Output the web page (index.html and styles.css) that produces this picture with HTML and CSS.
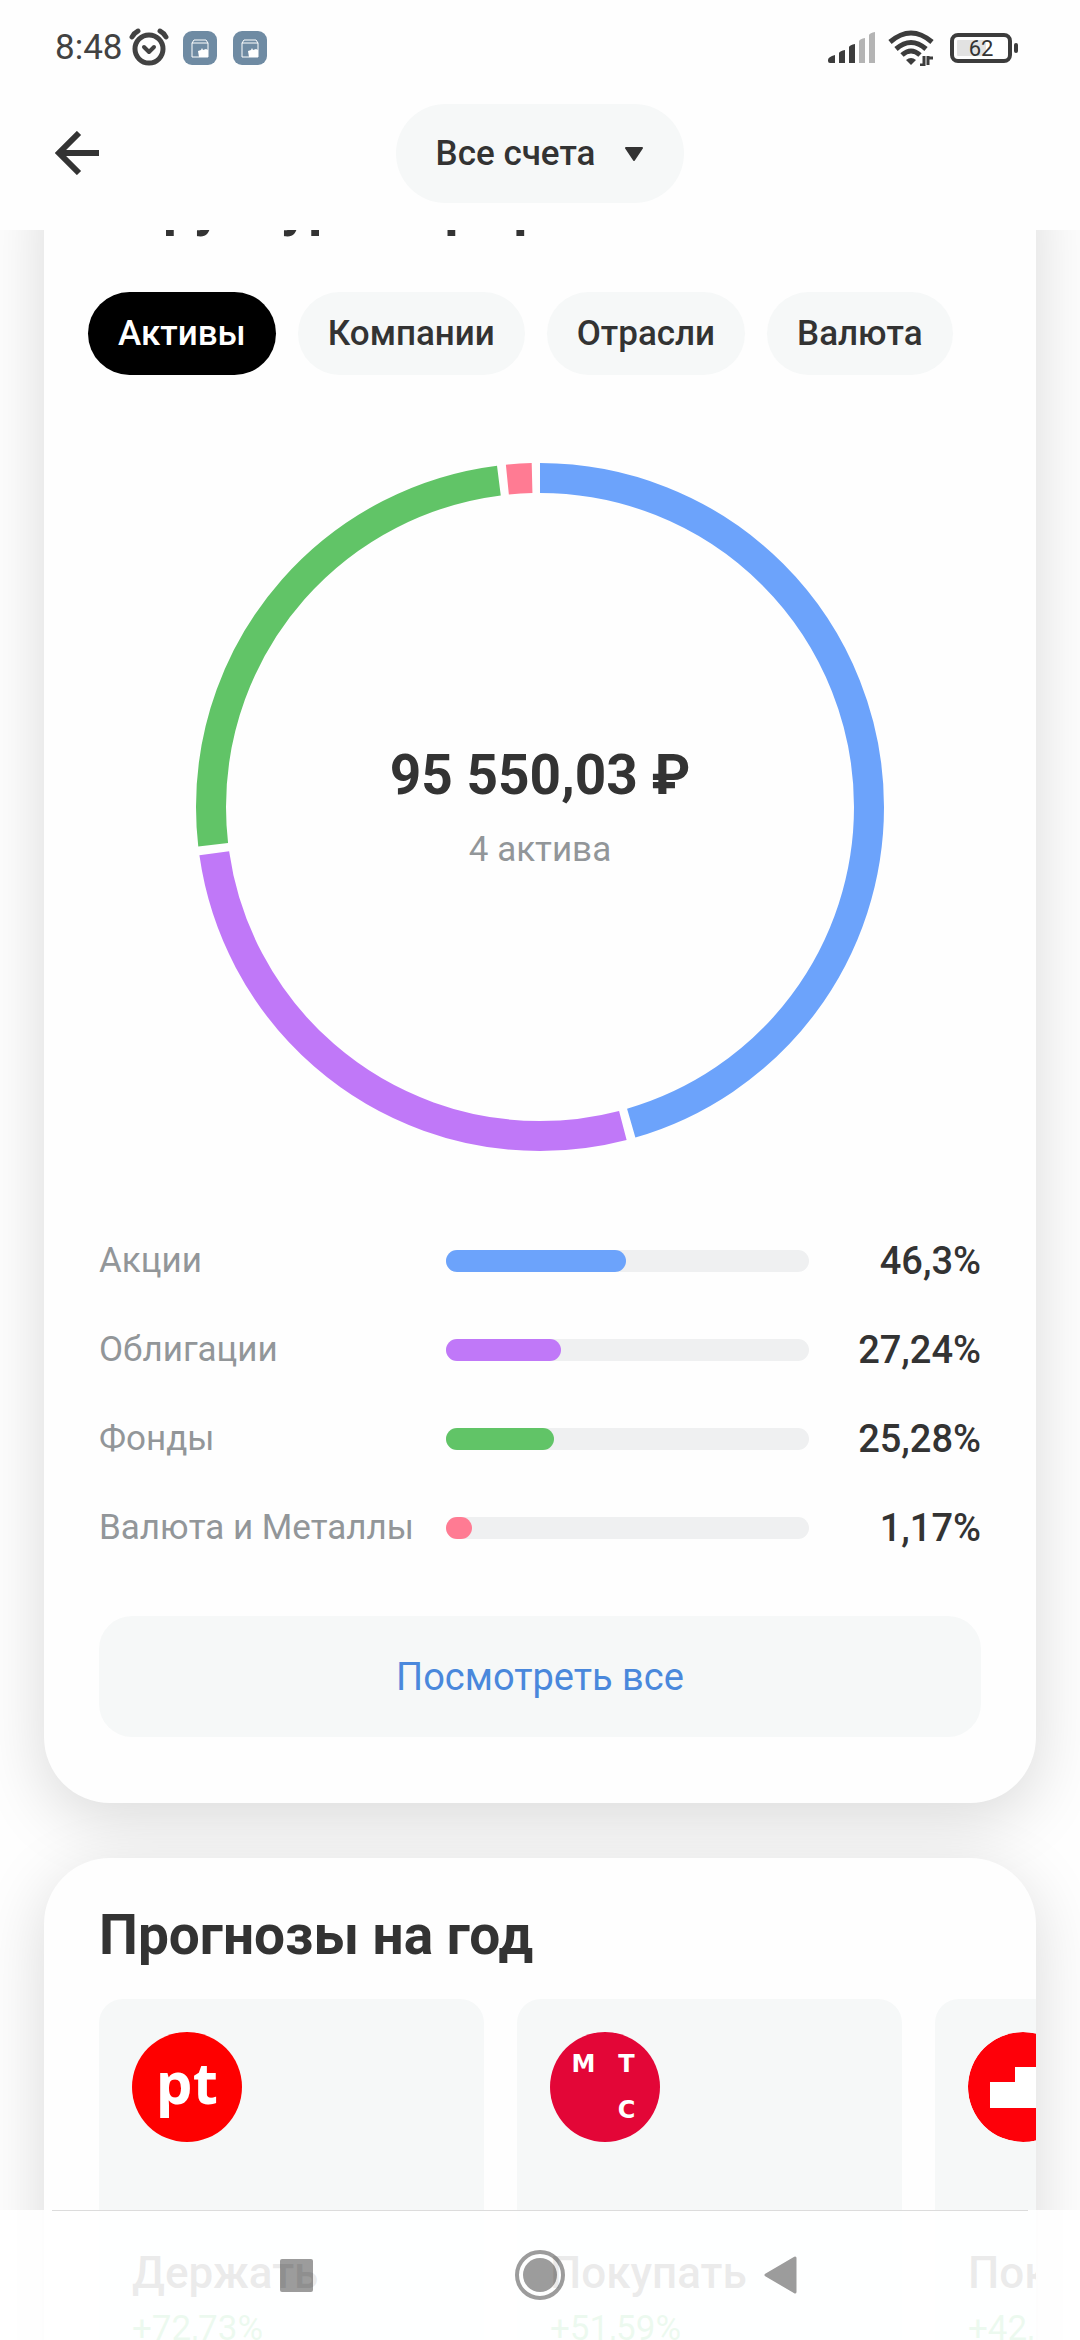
FILE: index.html
```
<!DOCTYPE html>
<html lang="ru">
<head>
    <meta charset="UTF-8">
    <meta name="viewport" content="width=device-width, initial-scale=1.0">
    <title>Аналитика портфеля</title>
    <link rel="stylesheet" href="styles.css">
</head>
<body>

<header class="header">
    <div class="status-bar">
        <div class="status-left">
            <span class="time">8:48</span>
            <!-- alarm -->
            <svg class="icon-alarm" viewBox="0 0 40 40" fill="none" stroke="#424242" stroke-linecap="round">
                <circle cx="20" cy="21" r="14" stroke-width="5"/>
                <path d="M15 19l5 5 5-5" stroke-width="4" stroke-linejoin="round"/>
                <path d="M3 9Q5 5 9 3M37 9Q35 5 31 3" stroke-width="5"/>
            </svg>
            <svg class="icon-app" viewBox="0 0 34 34">
                <rect width="34" height="34" rx="9" fill="#6f8ba3"/>
                <path d="M9 12h16v14H9zM9 12l2-3h12l2 3" fill="none" stroke="#fff"/>
                <path d="M15 20l3-1 1-2 1 2 3-1 2 1v7h-9z" fill="#fff"/>
            </svg>
            <svg class="icon-app" viewBox="0 0 34 34">
                <rect width="34" height="34" rx="9" fill="#6f8ba3"/>
                <path d="M9 12h16v14H9zM9 12l2-3h12l2 3" fill="none" stroke="#fff"/>
                <path d="M15 20l3-1 1-2 1 2 3-1 2 1v7h-9z" fill="#fff"/>
            </svg>
        </div>
        <div class="status-right">
            <!-- signal -->
            <svg class="icon-signal" viewBox="0 0 48 32">
                <path d="M0 28q0-3 7-5v8H2q-2 0-2-2zM11 21q1-2 6-3v13h-6zM21 15q1-2 6-3v19h-6z" fill="#3c3c3c"/>
                <path d="M31 9q1-2 6-3v25h-6zM41 3q1-2 6-3v31h-6z" fill="#b4b4b4"/>
            </svg>
            <!-- wifi -->
            <svg class="icon-wifi" viewBox="0 0 46 36" fill="none" stroke="#3c3c3c" stroke-width="5">
                <path d="M2 12Q23-6 44 12M8 19Q23 6 38 19M14 25Q23 17 32 25"/>
                <path d="M18 30q5-4 10 0l-5 5z" fill="#3c3c3c" stroke="none"/>
                <path d="M36 26v9h-4M40 35v-9M40 28h5" stroke-width="3"/>
            </svg>
            <div class="battery"><span class="battery-level">62</span></div>
        </div>
    </div>
    <div class="app-bar">
        <button class="back" type="button" aria-label="Назад">
            <svg class="icon-back" viewBox="0 0 44 44" fill="none" stroke="#333" stroke-width="6">
                <path d="M44 22H4M24 2L4 22l20 20"/>
            </svg>
        </button>
        <button class="account" type="button">
            Все счета
            <svg class="icon-caret" viewBox="0 0 20 16"><path d="M2 3h16L10 15z" fill="#333" stroke="#333" stroke-width="2" stroke-linejoin="round"/></svg>
        </button>
    </div>
</header>

<main class="content">
    <section class="card structure">
        <h2 class="card-title">Структура портфеля</h2>
        <div class="chips">
            <button class="chip active" type="button">Активы</button>
            <button class="chip" type="button">Компании</button>
            <button class="chip" type="button">Отрасли</button>
            <button class="chip" type="button">Валюта</button>
        </div>
        <div class="chart">
            <svg class="donut" viewBox="0 0 688 688" fill="none" stroke-width="30">
                <g transform="rotate(-90 344 344)">
                    <circle cx="344" cy="344" r="329" pathLength="3600" stroke="#6ca3fb" stroke-dasharray="1639 1961"/>
                    <circle cx="344" cy="344" r="329" pathLength="3600" stroke="#c078f8" stroke-dasharray="965 2635" stroke-dashoffset="-1654"/>
                    <circle cx="344" cy="344" r="329" pathLength="3600" stroke="#61c467" stroke-dasharray="894 2706" stroke-dashoffset="-2634"/>
                    <circle cx="344" cy="344" r="329" pathLength="3600" stroke="#ff7b93" stroke-dasharray="43 3557" stroke-dashoffset="-3543"/>
                </g>
            </svg>
            <div class="total">
                <div class="total-sum">95 550,03 ₽</div>
                <div class="total-count">4 актива</div>
            </div>
        </div>
        <ul class="legend">
            <li class="legend-row">
                <span class="legend-name">Акции</span>
                <span class="bar"><span class="fill stocks" style="--share: 0.463"></span></span>
                <span class="legend-value">46,3%</span>
            </li>
            <li class="legend-row">
                <span class="legend-name">Облигации</span>
                <span class="bar"><span class="fill bonds" style="--share: 0.2724"></span></span>
                <span class="legend-value">27,24%</span>
            </li>
            <li class="legend-row">
                <span class="legend-name">Фонды</span>
                <span class="bar"><span class="fill funds" style="--share: 0.2528"></span></span>
                <span class="legend-value">25,28%</span>
            </li>
            <li class="legend-row">
                <span class="legend-name">Валюта и Металлы</span>
                <span class="bar"><span class="fill currency" style="--share: 0.0117"></span></span>
                <span class="legend-value">1,17%</span>
            </li>
        </ul>
        <button class="show-all" type="button">Посмотреть все</button>
    </section>

    <section class="card forecasts">
        <h2 class="card-title">Прогнозы на год</h2>
        <div class="tiles">
            <article class="tile">
                <div class="logo logo-pt">pt</div>
                <h3 class="advice">Держать</h3>
                <p class="growth">+72,73%</p>
            </article>
            <article class="tile">
                <div class="logo logo-mts"><span>М</span><span>Т</span><span class="last">С</span></div>
                <h3 class="advice">Покупать</h3>
                <p class="growth">+51,59%</p>
            </article>
            <article class="tile">
                <svg class="logo" viewBox="0 0 110 110">
                    <circle cx="55" cy="55" r="55" fill="#fe0009"/>
                    <path d="M22 50h25V35h40v15h15v26H22z" fill="#fff"/>
                </svg>
                <h3 class="advice">Покупать</h3>
                <p class="growth">+42,</p>
            </article>
        </div>
    </section>
</main>

<nav class="nav-bar">
    <button class="nav-button" type="button" aria-label="Недавние">
        <svg class="icon-nav" viewBox="0 0 52 52"><rect x="6" y="10" width="33" height="33" rx="2"/></svg>
    </button>
    <button class="nav-button" type="button" aria-label="Домой">
        <svg class="icon-nav" viewBox="0 0 52 52">
            <circle cx="26" cy="26" r="23" fill="none" stroke="#000" stroke-width="4"/>
            <circle cx="26" cy="26" r="17"/>
        </svg>
    </button>
    <button class="nav-button" type="button" aria-label="Назад">
        <svg class="icon-nav" viewBox="0 0 52 52"><path d="M12 26L41 9v34z" stroke="#000" stroke-width="3" stroke-linejoin="round"/></svg>
    </button>
</nav>

</body>
</html>
```

FILE: styles.css
```
* {
    box-sizing: border-box;
}
body {
    margin: 0;
    height: 100vh;
    display: flex;
    flex-direction: column;
    overflow: hidden;
    background-color: #fefefe;
    color: #333;
    font-family: Roboto, sans-serif;
    font-size: 35px;
}
button {
    border: none;
    padding: 0;
    background: none;
    color: inherit;
    font: inherit;
    cursor: pointer;
}
svg {
    display: block;
    flex: none;
}

/* Header */
.header {
    position: relative;
    z-index: 1;
    height: 230px;
    flex: none;
    background-color: #fefefe;
}
.status-bar {
    display: flex;
    justify-content: space-between;
    height: 96px;
    padding: 0 62px 0 55px;
}
.status-left, .status-right {
    display: flex;
    align-items: center;
}
.time {
    line-height: 40px;
    color: #424242;
}
.icon-alarm {
    width: 40px;
    height: 40px;
    margin: 0 14px 0 6px;
}
.icon-app {
    width: 34px;
    height: 34px;
    margin-right: 16px;
}
.icon-signal {
    width: 48px;
    height: 32px;
    margin-right: 12px;
}
.icon-wifi {
    width: 46px;
    height: 36px;
    margin-right: 16px;
}
.battery {
    position: relative;
    width: 62px;
    height: 30px;
    border: 4px solid #3c3c3c;
    border-radius: 8px;
    background: linear-gradient(90deg, #e2e2e2 60%, #fff 60%);
    background-clip: content-box;
    padding: 3px;
    margin-right: 6px;
}
.battery::after {
    content: "";
    position: absolute;
    right: -10px;
    top: 6px;
    width: 4px;
    height: 10px;
    border-radius: 2px;
    background-color: #3c3c3c;
}
.battery-level {
    display: block;
    font-size: 22px;
    line-height: 18px;
    text-align: center;
}
.app-bar {
    display: grid;
    grid-template-columns: 1fr auto 1fr;
    align-items: center;
    height: 114px;
    padding: 0 55px;
}
.back {
    justify-self: start;
}
.icon-back {
    width: 44px;
    height: 44px;
}
.account {
    display: flex;
    align-items: center;
    gap: 29px;
    height: 99px;
    padding: 0 40px;
    border-radius: 50px;
    background-color: #f6f8f8;
    font-weight: 500;
}
.icon-caret {
    width: 20px;
    height: 16px;
}

/* Cards */
.content {
    display: flex;
    flex-direction: column;
    gap: 55px;
    flex: 1;
    min-height: 0;
    padding: 0 44px;
}
.card {
    flex: none;
    padding: 44px 55px 66px;
    border-radius: 66px;
    background-color: #fefefe;
    box-shadow: 0 16px 66px rgba(0, 0, 0, 0.15);
}
.card-title {
    margin: 0;
    font-size: 55px;
    line-height: 66px;
    font-weight: 700;
}
/* scrolled partly under the header */
.structure {
    margin-top: -101px;
}
.chips {
    display: flex;
    gap: 22px;
    margin: 53px -11px 88px;
}
.chip {
    height: 83px;
    padding: 0 30px;
    border-radius: 42px;
    background-color: #f6f8f8;
    font-weight: 500;
}
.chip.active {
    background-color: #000;
    color: #fff;
}

/* Chart */
.chart {
    display: grid;
    justify-items: center;
    align-items: center;
}
.donut, .total {
    grid-area: 1 / 1;
}
.donut {
    width: 688px;
    max-width: 100%;
}
.total {
    text-align: center;
}
.total-sum {
    font-size: 55px;
    line-height: 66px;
    font-weight: 700;
}
.total-count {
    margin-top: 20px;
    line-height: 44px;
    color: #929699;
}

/* Legend */
.legend {
    list-style: none;
    margin: 88px 0 66px;
    padding: 0;
    display: grid;
    gap: 45px;
}
.legend-row {
    display: grid;
    grid-template-columns: 347px 1fr 172px;
    align-items: center;
    line-height: 44px;
}
.legend-name {
    color: #929699;
    white-space: nowrap;
}
.legend-value {
    font-size: 38px;
    font-weight: 500;
    text-align: right;
}
.bar {
    height: 22px;
    border-radius: 11px;
    background-color: #eff0f1;
}
.fill {
    display: block;
    height: 22px;
    width: calc(22px + (100% - 22px) * var(--share));
    border-radius: 11px;
}
.stocks {
    background-color: #6ca3fb;
}
.bonds {
    background-color: #c078f8;
}
.funds {
    background-color: #61c467;
}
.currency {
    background-color: #ff7b93;
}
.show-all {
    width: 100%;
    height: 121px;
    border-radius: 33px;
    background-color: #f6f8f8;
    color: #4a88dc;
    font-size: 38px;
}

/* Forecasts */
.forecasts {
    overflow: hidden;
}
.tiles {
    display: flex;
    gap: 33px;
    margin-top: 31px;
}
.tile {
    flex: 0 0 385px;
    height: 400px;
    padding: 33px;
    border-radius: 24px;
    background-color: #f6f8f8;
}
.logo {
    width: 110px;
    height: 110px;
    border-radius: 50%;
    color: #fff;
}
.logo-pt {
    background-color: #fe0000;
    font-family: "Noto Sans", sans-serif;
    font-size: 58px;
    line-height: 100px;
    font-weight: 700;
    text-align: center;
}
.logo-mts {
    display: grid;
    grid-template-columns: 1fr 1fr;
    padding: 17px 12px;
    background-color: #e30637;
    font-family: "DejaVu Sans", sans-serif;
    font-size: 24px;
    line-height: 30px;
    font-weight: 700;
    text-align: center;
}
.logo-mts .last {
    grid-column: 2;
    align-self: end;
}
.advice {
    margin: 105px 0 0;
    font-size: 44px;
    line-height: 52px;
    font-weight: 500;
}
.growth {
    margin: 8px 0 0;
    line-height: 44px;
    color: #3fc45c;
}

/* System navigation */
.nav-bar {
    position: fixed;
    left: 0;
    right: 0;
    bottom: 0;
    z-index: 1;
    display: flex;
    justify-content: center;
    align-items: center;
    gap: 188px;
    height: 130px;
    background-color: rgba(255, 255, 255, 0.9);
}
.nav-bar::before {
    content: "";
    position: absolute;
    top: 0;
    left: 52px;
    right: 52px;
    height: 1px;
    background-color: #dcdcdc;
}
.icon-nav {
    width: 52px;
    height: 52px;
    opacity: 0.39;
}
```
